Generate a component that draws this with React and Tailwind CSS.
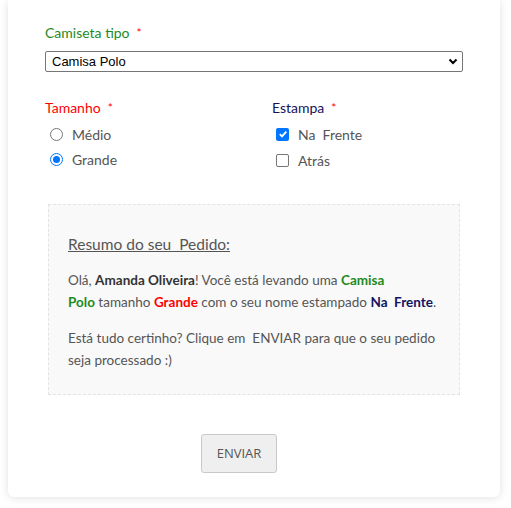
import React from "react";

export default function App() {
  return (
    <div className="w-[511px] h-[508px] bg-white overflow-hidden">
      <div
        className="ml-[8px] w-[492px] h-[497px] bg-white rounded-b-[6px] shadow-[0_1px_8px_rgba(0,0,0,0.12)] pt-[24px] px-[37px]"
        style={{ fontFamily: 'Lato, "Noto Sans", sans-serif' }}
      >
        <div className="text-[14px] text-[#1e8a1e] leading-[18px] flex">
          <span>Camiseta tipo</span>
          <span className="text-[#ff0000] ml-[7px] text-[12px]">*</span>
        </div>
        <div
          className="mt-[9px] w-[418px] h-[21px] border border-[#767676] rounded-[2px] flex items-center justify-between pl-[6px] pr-[4px] text-[13px] text-black"
          style={{ fontFamily: '"Liberation Sans", Arial, sans-serif' }}
        >
          <span>Camisa Polo</span>
          <svg width="10" height="7" viewBox="0 0 10 7">
            <path d="M1.5 1.5 L5 5 L8.5 1.5" fill="none" stroke="#000" strokeWidth="2" />
          </svg>
        </div>

        <div className="mt-[27px] flex">
          <div className="w-[227px]">
            <div className="text-[14px] text-[#ff0000] leading-[18px] flex">
              <span>Tamanho</span>
              <span className="ml-[7px] text-[12px]">*</span>
            </div>
            <div className="mt-[8px] flex items-center h-[18px] text-[14px] text-[#555]">
              <span className="ml-[5px] w-[13px] h-[13px] rounded-full border border-[#767676] bg-white"></span>
              <span className="ml-[9px]">Médio</span>
            </div>
            <div className="mt-[7px] flex items-center h-[18px] text-[14px] text-[#555]">
              <span className="ml-[5px] w-[13px] h-[13px] rounded-full border-[1.5px] border-[#0075ff] bg-white flex items-center justify-center">
                <span className="w-[7px] h-[7px] rounded-full bg-[#0075ff]"></span>
              </span>
              <span className="ml-[9px]">Grande</span>
            </div>
          </div>
          <div>
            <div className="text-[14px] text-[#13135e] leading-[18px] flex">
              <span>Estampa</span>
              <span className="ml-[7px] text-[12px] text-[#ff0000]">*</span>
            </div>
            <div className="mt-[8px] flex items-center h-[18px] text-[14px] text-[#555]">
              <span className="ml-[4px] w-[13px] h-[13px] rounded-[2px] bg-[#0075ff] flex items-center justify-center">
                <svg width="10" height="10" viewBox="0 0 10 10">
                  <path d="M1.8 5.2 L4 7.4 L8.3 2.6" fill="none" stroke="#fff" strokeWidth="1.8" />
                </svg>
              </span>
              <span className="ml-[9px]">Na&nbsp; Frente</span>
            </div>
            <div className="mt-[8px] flex items-center h-[18px] text-[14px] text-[#555]">
              <span className="ml-[4px] w-[13px] h-[13px] rounded-[2px] border border-[#767676] bg-white"></span>
              <span className="ml-[9px]">Atrás</span>
            </div>
          </div>
        </div>

        <div className="mt-[35px] ml-[3px] w-[412px] h-[191px] bg-[#f9f9f9] border border-dashed border-[#e3e3e3] pt-[28px] px-[19px] text-[#555]">
          <div className="text-[15.5px] underline leading-[22px] text-[#555]">Resumo do seu&nbsp; Pedido:</div>
          <p className="mt-[14px] text-[13.5px] leading-[22px] whitespace-nowrap">
            Olá, <b className="font-bold text-[#333]">Amanda Oliveira</b>! Você está levando uma{" "}
            <b className="font-bold text-[#1e8a1e]">Camisa</b>
            <br />
            <b className="font-bold text-[#1e8a1e]">Polo</b> tamanho{" "}
            <b className="font-bold text-[#ff0000]">Grande</b> com o seu nome estampado{" "}
            <b className="font-bold text-[#13135e]">Na&nbsp; Frente</b>.
          </p>
          <p className="mt-[14px] text-[13.5px] leading-[22px] whitespace-nowrap">
            Está tudo certinho? Clique em&nbsp; ENVIAR para que o seu pedido
            <br />
            seja processado :)
          </p>
        </div>

        <div className="mt-[39px] flex">
          <button
            className="ml-[156px] w-[76px] h-[39px] bg-[#efefef] border border-[#c8c8c8] rounded-[3px] text-[13px] text-[#555]"
            style={{ fontFamily: '"Open Sans", sans-serif' }}
          >
            ENVIAR
          </button>
        </div>
      </div>
    </div>
  );
}
